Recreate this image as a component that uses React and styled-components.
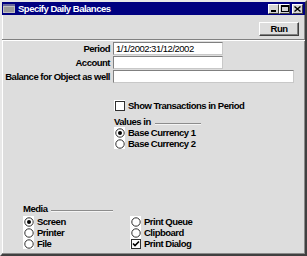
import styled, { createGlobalStyle } from "styled-components";

const GlobalStyle = createGlobalStyle`
  html, body {
    margin: 0;
    padding: 0;
    background: #dddddd;
  }
  body {
    font-family: "Liberation Sans Narrow", "Arial Narrow", "Liberation Sans", Arial, sans-serif;
    font-size: 9.5px;
    letter-spacing: -0.5px;
    color: #000;
  }
`;

const Window = styled.div`
  width: 307px;
  height: 256px;
  box-sizing: border-box;
  display: flex;
  flex-direction: column;
  background: #dddddd;
  border: 2px solid;
  border-color: #e8e8e8 #404040 #404040 #e8e8e8;
  box-shadow: inset -1px -1px 0 #8a8a8a, inset 1px 1px 0 #ffffff;
`;

const TitleBar = styled.div`
  height: 13px;
  background: #000080;
  display: flex;
  align-items: center;
  padding: 0 2px 0 1px;
  color: #fff;
  font-weight: bold;
`;

const TitleText = styled.span`
  flex: 1;
  margin-left: 3px;
  white-space: nowrap;
`;

const CaptionButtons = styled.div`
  display: flex;
`;

const CaptionButton = styled.div`
  width: 11px;
  height: 10px;
  box-sizing: border-box;
  background: #d4d4d4;
  border: 1px solid;
  border-color: #fff #404040 #404040 #fff;
  margin-left: ${(p) => (p.$gap ? "2px" : "0")};
  display: flex;
  align-items: center;
  justify-content: center;
`;

const Toolbar = styled.div`
  height: 24px;
  display: flex;
  justify-content: flex-end;
  align-items: flex-start;
  padding: 7px 6px 0 0;
  box-sizing: border-box;
`;

const RunButton = styled.div`
  width: 40px;
  height: 14px;
  box-sizing: border-box;
  border: 1px solid;
  border-color: #fff #404040 #404040 #fff;
  box-shadow: inset -1px -1px 0 #808080;
  background: #dddddd;
  font-weight: bold;
  display: flex;
  align-items: center;
  justify-content: center;
  line-height: 1;
`;

const Separator = styled.div`
  border-top: 1px solid #808080;
  border-bottom: 1px solid #ffffff;
`;

const Form = styled.div`
  display: grid;
  grid-template-columns: 108px auto;
  grid-auto-rows: 13px;
  column-gap: 3px;
  row-gap: 1px;
  padding-top: 1px;
`;

const Label = styled.div`
  font-weight: bold;
  text-align: right;
  line-height: 13px;
  white-space: nowrap;
`;

const Field = styled.div`
  width: ${(p) => p.$w}px;
  height: 13px;
  box-sizing: border-box;
  background: #fff;
  border: 1px solid;
  border-color: #808080 #c8c8c8 #c8c8c8 #808080;
  padding-left: 2px;
  line-height: 11px;
  white-space: nowrap;
`;

const Options = styled.div`
  margin-left: 112px;
  margin-top: 17px;
  display: flex;
  flex-direction: column;
`;

const Heading = styled.div`
  display: flex;
  align-items: center;
  height: 11px;
  font-weight: bold;
  margin-top: ${(p) => p.$top || 0}px;
  margin-bottom: ${(p) => p.$bottom || 0}px;
`;

const Rule = styled.span`
  width: ${(p) => p.$w}px;
  height: 0;
  margin-left: 4px;
  margin-top: 5px;
  border-top: 1px solid #8c8c8c;
  border-bottom: 1px solid #f4f4f4;
`;

const Item = styled.div`
  display: flex;
  align-items: center;
  height: 11px;
  font-weight: bold;
  white-space: nowrap;
`;

const MarkBox = styled.span`
  width: 11px;
  height: 11px;
  background: #fff;
  margin-right: 3px;
  display: flex;
  align-items: center;
  justify-content: center;
  flex: none;
`;

const Media = styled.div`
  margin-top: auto;
  padding: 0 0 5px 21px;
`;

const MediaGrid = styled.div`
  display: grid;
  grid-template-columns: 107px auto;
`;

const Radio = ({ on, children }) => (
  <Item>
    <MarkBox>
      <svg width="10" height="10" viewBox="0 0 10 10">
        <circle cx="5" cy="5" r="4.2" fill="#fff" stroke="#303030" strokeWidth="1" />
        {on && <circle cx="5" cy="5" r="2" fill="#000" />}
      </svg>
    </MarkBox>
    {children}
  </Item>
);

const Check = ({ on, children }) => (
  <Item>
    <MarkBox>
      <svg width="10" height="10" viewBox="0 0 10 10">
        <rect x="0.5" y="0.5" width="9" height="9" fill="#fff" stroke="#303030" />
        {on && <path d="M2 4.5 L4 6.5 L8 2.5" fill="none" stroke="#000" strokeWidth="1.6" />}
      </svg>
    </MarkBox>
    {children}
  </Item>
);

export default function App() {
  return (
    <>
      <GlobalStyle />
      <Window>
        <TitleBar>
          <svg width="12" height="9" viewBox="0 0 12 9">
            <rect x="0" y="0" width="12" height="9" fill="#c0c0c0" />
            <rect x="0" y="0" width="12" height="2" fill="#6a6a9a" />
            <rect x="1" y="3" width="10" height="5" fill="#9a9a9a" />
          </svg>
          <TitleText>Specify Daily Balances</TitleText>
          <CaptionButtons>
            <CaptionButton>
              <svg width="7" height="6" viewBox="0 0 7 6">
                <rect x="1" y="4" width="5" height="2" fill="#000" />
              </svg>
            </CaptionButton>
            <CaptionButton>
              <svg width="8" height="7" viewBox="0 0 8 7">
                <rect x="0.5" y="0.5" width="7" height="6" fill="none" stroke="#000" />
                <rect x="0" y="0" width="8" height="2" fill="#000" />
              </svg>
            </CaptionButton>
            <CaptionButton $gap>
              <svg width="7" height="6" viewBox="0 0 7 6">
                <path d="M0.5 0.5 L6.5 5.5 M6.5 0.5 L0.5 5.5" stroke="#000" strokeWidth="1.4" />
              </svg>
            </CaptionButton>
          </CaptionButtons>
        </TitleBar>
        <Toolbar>
          <RunButton>Run</RunButton>
        </Toolbar>
        <Separator />
        <Form>
          <Label>Period</Label>
          <Field $w={110}>1/1/2002:31/12/2002</Field>
          <Label>Account</Label>
          <Field $w={110} />
          <Label>Balance for Object as well</Label>
          <Field $w={181} />
        </Form>
        <Options>
          <Check>Show Transactions in Period</Check>
          <Heading $top={5}>
            Values in
            <Rule $w={46} />
          </Heading>
          <Radio on>Base Currency 1</Radio>
          <Radio>Base Currency 2</Radio>
        </Options>
        <Media>
          <Heading $bottom={2}>
            Media
            <Rule $w={62} />
          </Heading>
          <MediaGrid>
            <Radio on>Screen</Radio>
            <Radio>Print Queue</Radio>
            <Radio>Printer</Radio>
            <Radio>Clipboard</Radio>
            <Radio>File</Radio>
            <Check on>Print Dialog</Check>
          </MediaGrid>
        </Media>
      </Window>
    </>
  );
}
